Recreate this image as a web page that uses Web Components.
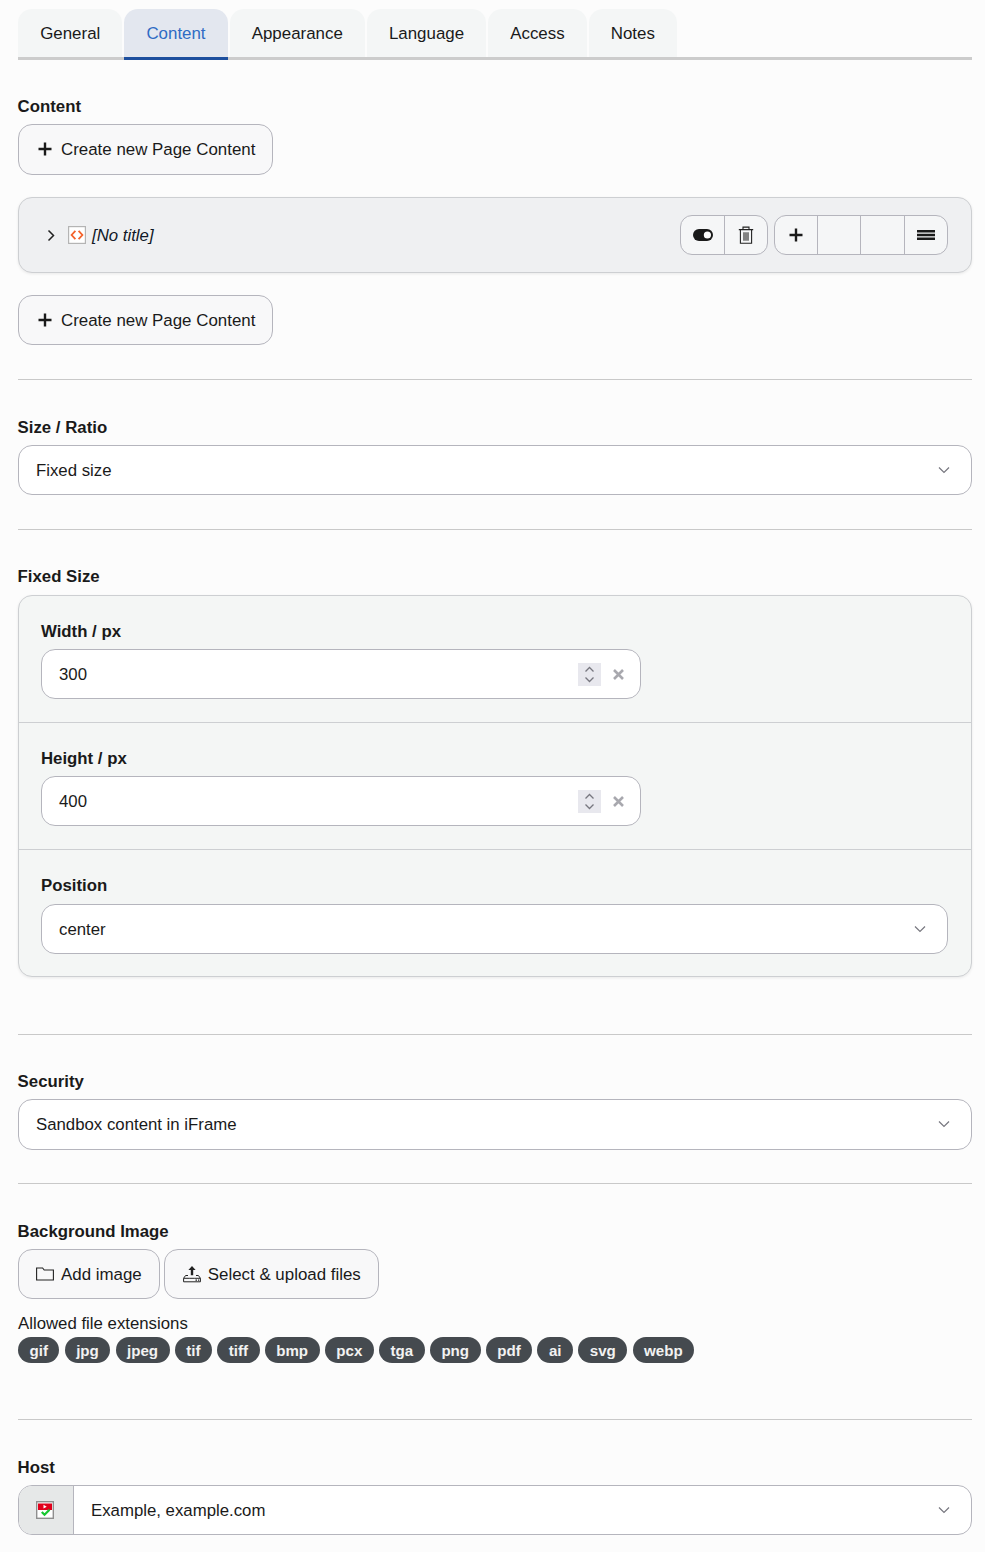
<!DOCTYPE html>
<html>
<head>
<meta charset="utf-8">
<title>Content</title>
<style>
  html, body { margin: 0; padding: 0; }
  body {
    background: #fcfcfc;
    color: #1a1a1a;
    font-family: "Liberation Sans", Arial, sans-serif;
    font-size: 16.8px;
  }
  main { display: block; padding: 9px 13px 17px 18px; }
</style>
</head>
<body>
<main>
  <form-tabs>
    <form-tab>General</form-tab>
    <form-tab active>Content</form-tab>
    <form-tab>Appearance</form-tab>
    <form-tab>Language</form-tab>
    <form-tab>Access</form-tab>
    <form-tab>Notes</form-tab>
  </form-tabs>

  <form-field label="Content" style="margin-top:36.3px">
    <form-button icon="plus" style="height:50.4px">Create new Page Content</form-button>
    <inline-record title-text="[No title]" style="margin-top:21.9px"></inline-record>
    <form-button icon="plus" style="margin-top:22.4px">Create new Page Content</form-button>
  </form-field>
  <form-divider></form-divider>

  <form-field label="Size / Ratio">
    <form-select>Fixed size</form-select>
  </form-field>
  <form-divider></form-divider>

  <form-field label="Fixed Size" tight>
    <form-panel>
      <panel-section>
        <form-field label="Width / px" flush><number-input value="300"></number-input></form-field>
      </panel-section>
      <panel-section style="height:127.4px">
        <form-field label="Height / px" flush><number-input value="400"></number-input></form-field>
      </panel-section>
      <panel-section last>
        <form-field label="Position" flush tight><form-select>center</form-select></form-field>
      </panel-section>
    </form-panel>
  </form-field>
  <form-divider gap="56.9"></form-divider>

  <form-field label="Security">
    <form-select style="height:50.4px">Sandbox content in iFrame</form-select>
  </form-field>
  <form-divider gap="33.5"></form-divider>

  <form-field label="Background Image">
    <button-row>
      <form-button icon="folder">Add image</form-button>
      <form-button icon="upload">Select &amp; upload files</form-button>
    </button-row>
    <ext-list exts="gif jpg jpeg tif tiff bmp pcx tga png pdf ai svg webp"></ext-list>
  </form-field>
  <form-divider gap="56.3"></form-divider>

  <form-field label="Host">
    <form-select addon>Example, example.com</form-select>
  </form-field>
</main>

<script>
const icons = {
  plus: `<svg width="18" height="18" viewBox="0 0 18 18"><path d="M9 2.5v13M2.5 9h13" stroke="#1a1a1a" stroke-width="2.4" fill="none"/></svg>`,
  folder: `<svg width="18" height="16" viewBox="0 0 18 16"><path d="M.6 14V2h6l1.6 2h9.2v10z" stroke="#222" stroke-width="1.1" fill="none"/></svg>`,
  upload: `<svg class="shift" width="18" height="18" viewBox="0 0 18 18"><path d="M9 1l3.6 4h-2.4v5.2H7.8V5H5.4z" fill="#222"/><path d="M5 10.5H2.6L.6 13.2v3.6h16.8v-3.6l-2-2.7H13" stroke="#222" stroke-width="1" fill="none"/><path d="M.8 13.3h5.4M11.8 13.3h5.4M6.2 13.3h5.6" stroke="#222" stroke-width="1"/><path d="M12.5 15.1h1.5M15 15.1h1.2" stroke="#222" stroke-width="1.1"/></svg>`,
  toggle: `<svg width="20" height="12" viewBox="0 0 20 12"><rect width="20" height="12" rx="6" fill="#1a1a1a"/><circle cx="14.4" cy="6" r="3.6" fill="#fff"/></svg>`,
  trash: `<svg width="16" height="18" viewBox="0 0 16 18"><path d="M.8 3.6h14.4M5 3.4V1.1h6v2.3M2.4 3.8v13.4h11.2V3.8" stroke="#222" stroke-width="1.1" fill="none"/><path d="M6 6.2v8.6M8 6.2v8.6M10 6.2v8.6" stroke="#222" stroke-width="1.1"/></svg>`,
  menu: `<svg width="18" height="10" viewBox="0 0 18 10"><path d="M0 1.3h18M0 5h18M0 8.7h18" stroke="#1a1a1a" stroke-width="2.4" fill="none"/></svg>`
};

class FormTabs extends HTMLElement {
  constructor() {
    super();
    this.attachShadow({ mode: 'open' }).innerHTML = `
    <style>
      :host { display: flex; gap: 1.75px; border-bottom: 3px solid #ccc; }
    </style>
    <slot></slot>`;
  }
}

class FormTab extends HTMLElement {
  constructor() {
    super();
    this.attachShadow({ mode: 'open' }).innerHTML = `
    <style>
      :host {
        display: block;
        background: #f4f6f6;
        border-radius: 14px 14px 0 0;
        padding: 0 22.2px;
        height: 48px;
        line-height: 50px;
        font-size: 16.9px;
        margin-bottom: -3px;
        border-bottom: 3px solid #ccc;
      }
      :host([active]) {
        background: #e3e7ef;
        color: #2f6cc4;
        border-bottom-color: #1d4f9e;
      }
    </style>
    <slot></slot>`;
  }
}

class FormField extends HTMLElement {
  constructor() {
    super();
    this.attachShadow({ mode: 'open' }).innerHTML = `
    <style>
      :host { display: block; margin-top: 36.7px; }
      :host([flush]) { margin-top: 0; }
      label { display: block; font-weight: bold; line-height: 21px; margin: 0 0 7px -.4px; }
      :host([flush]) label { margin-left: 0; }
      :host([tight]) label { line-height: 20px; margin-bottom: 8px; }
    </style>
    <label>${this.getAttribute('label')}</label>
    <slot></slot>`;
  }
}

class FormDivider extends HTMLElement {
  constructor() {
    super();
    const gap = this.getAttribute('gap') || 34;
    this.attachShadow({ mode: 'open' }).innerHTML = `
    <style>
      :host { display: block; height: 1px; background: #c9c9c9; margin-top: ${gap}px; }
    </style>`;
  }
}

class FormButton extends HTMLElement {
  constructor() {
    super();
    const icon = icons[this.getAttribute('icon')] || '';
    this.attachShadow({ mode: 'open' }).innerHTML = `
    <style>
      :host {
        display: inline-flex;
        vertical-align: top;
        align-items: center;
        gap: 7px;
        height: 50.2px;
        box-sizing: border-box;
        padding: 0 17px 0 17px;
        background: #f8f8f9;
        border: 1px solid #b5b5bd;
        border-radius: 14px;
        font-size: 16.9px;
      }
      svg { display: block; }
      svg.shift { margin-left: 1px; }
      span { padding-top: 2px; }
    </style>
    ${icon}<span><slot></slot></span>`;
  }
}

class ButtonRow extends HTMLElement {
  constructor() {
    super();
    this.attachShadow({ mode: 'open' }).innerHTML = `
    <style>
      :host { display: flex; gap: 4px; }
    </style>
    <slot></slot>`;
  }
}

class FormSelect extends HTMLElement {
  constructor() {
    super();
    const addon = this.hasAttribute('addon') ? `
      <span class="addon">
        <svg width="18" height="18" viewBox="0 0 18 18">
          <rect x=".7" y=".7" width="16.6" height="16.6" fill="#fff" stroke="#8f8f8f" stroke-width="1.4"/>
          <rect x="2" y="2.5" width="14" height="6.5" fill="#e0001b"/>
          <path d="M7.5 3.8l3.2 1.9-3.2 1.9z" fill="#fff"/>
          <path d="M5.8 11l2.7 2.7 5-5" stroke="#19c832" stroke-width="2.3" fill="none"/>
        </svg>
      </span>` : '';
    this.attachShadow({ mode: 'open' }).innerHTML = `
    <style>
      :host {
        display: flex;
        align-items: stretch;
        height: 50.2px;
        box-sizing: border-box;
        background: #fff;
        border: 1px solid #b5b5bd;
        border-radius: 14px;
        overflow: hidden;
      }
      .addon {
        flex: none;
        box-sizing: border-box;
        width: 55px;
        padding-right: 2px;
        background: #e6e8e8;
        border-right: 1px solid #b5b5bd;
        display: flex;
        align-items: center;
        justify-content: center;
      }
      .text { flex: 1; display: flex; align-items: center; padding: 2px 0 0 17px; }
      .chev { flex: none; display: flex; align-items: center; padding-right: 21px; }
    </style>
    ${addon}
    <span class="text"><slot></slot></span>
    <span class="chev">
      <svg width="12" height="8" viewBox="0 0 12 8"><path d="M1 1.5l5 5 5-5" stroke="#77777f" stroke-width="1.2" fill="none"/></svg>
    </span>`;
  }
}

class NumberInput extends HTMLElement {
  constructor() {
    super();
    this.attachShadow({ mode: 'open' }).innerHTML = `
    <style>
      :host {
        display: flex;
        align-items: center;
        width: 600px;
        height: 50.2px;
        box-sizing: border-box;
        background: #fff;
        border: 1px solid #b5b5bd;
        border-radius: 14px;
        padding-left: 17px;
      }
      .value { flex: 1; padding-top: 2px; }
      .spin {
        flex: none;
        width: 23px;
        height: 23px;
        background: #e8e8ee;
        display: flex;
        align-items: center;
        justify-content: center;
      }
      .clear { flex: none; display: flex; margin: 0 16.5px 0 11.5px; }
      svg { display: block; }
    </style>
    <span class="value">${this.getAttribute('value')}</span>
    <span class="spin">
      <svg width="11" height="19" viewBox="0 0 11 19"><path d="M1.5 6.5l4-4 4 4M1.5 12.5l4 4 4-4" stroke="#77777f" stroke-width="1.3" fill="none"/></svg>
    </span>
    <span class="clear">
      <svg width="11" height="11" viewBox="0 0 11 11"><path d="M1 1l9 9M10 1l-9 9" stroke="#a8a8ae" stroke-width="2.6" fill="none"/></svg>
    </span>`;
  }
}

class FormPanel extends HTMLElement {
  constructor() {
    super();
    this.attachShadow({ mode: 'open' }).innerHTML = `
    <style>
      :host {
        display: block;
        background: #f4f6f5;
        border: 1px solid #cdcfd2;
        border-radius: 14px;
        box-shadow: 0 1px 3px rgba(0, 0, 0, .08);
        overflow: hidden;
      }
    </style>
    <slot></slot>`;
  }
}

class PanelSection extends HTMLElement {
  constructor() {
    super();
    this.attachShadow({ mode: 'open' }).innerHTML = `
    <style>
      :host {
        display: block;
        box-sizing: border-box;
        height: 127px;
        padding: 25.5px 23px 0 22px;
        border-bottom: 1px solid #cdcfd2;
      }
      :host([last]) { border-bottom: 0; height: 125.6px; }
    </style>
    <slot></slot>`;
  }
}

class ToolGroup extends HTMLElement {
  constructor() {
    super();
    const cells = (this.getAttribute('cells') || '').split(' ')
      .map((name) => `<span>${icons[name] || ''}</span>`).join('');
    this.attachShadow({ mode: 'open' }).innerHTML = `
    <style>
      :host {
        display: flex;
        height: 40px;
        box-sizing: border-box;
        background: #f5f6f7;
        border: 1px solid #b5b5bd;
        border-radius: 12px;
        overflow: hidden;
      }
      span {
        box-sizing: border-box;
        width: 43px;
        display: flex;
        align-items: center;
        justify-content: center;
        border-left: 1px solid #b5b5bd;
      }
      span:first-of-type { border-left: 0; }
      span:first-of-type:nth-last-of-type(4) { width: 42px; }
      span:nth-of-type(3) { width: 44px; }
    </style>
    ${cells}`;
  }
}

class InlineRecord extends HTMLElement {
  constructor() {
    super();
    this.attachShadow({ mode: 'open' }).innerHTML = `
    <style>
      :host {
        display: flex;
        align-items: center;
        height: 76px;
        box-sizing: border-box;
        background: #eff0f2;
        border: 1px solid #cdcfd2;
        border-radius: 14px;
        box-shadow: 0 1px 3px rgba(0, 0, 0, .08);
        padding: 0 23px 0 28px;
      }
      .chev { display: block; margin-top: 1px; }
      .type { display: block; margin-left: 12px; }
      .title { flex: 1; margin-left: 6px; padding-top: 2px; font-style: italic; color: #111827; }
      .tools { display: flex; gap: 6px; }
    </style>
    <svg class="chev" width="9" height="13" viewBox="0 0 9 13"><path d="M1.5 1.5l5 5-5 5" stroke="#222" stroke-width="1.5" fill="none"/></svg>
    <svg class="type" width="18" height="18" viewBox="0 0 18 18">
      <rect x=".6" y=".6" width="16.8" height="16.8" fill="#fff" stroke="#b4b4b4" stroke-width="1.2"/>
      <path d="M7.4 4.8L3.6 9l3.8 4.2M10.6 4.8L14.4 9l-3.8 4.2" stroke="#f4622b" stroke-width="1.8" fill="none"/>
    </svg>
    <span class="title">${this.getAttribute('title-text')}</span>
    <span class="tools">
      <tool-group cells="toggle trash"></tool-group>
      <tool-group cells="plus blank blank menu"></tool-group>
    </span>`;
  }
}

class ExtList extends HTMLElement {
  constructor() {
    super();
    const badges = this.getAttribute('exts').split(' ')
      .map((ext) => `<b>${ext}</b>`).join('');
    this.attachShadow({ mode: 'open' }).innerHTML = `
    <style>
      :host { display: block; margin-top: 14.5px; }
      p { margin: 0; line-height: 20px; }
      div { display: flex; gap: 5.2px; margin-top: 3px; }
      b {
        display: block;
        height: 26px;
        line-height: 27px;
        padding: 0 11.5px;
        border-radius: 13px;
        background: #454a4f;
        color: #f2f2f2;
        font-size: 15.12px;
      }
    </style>
    <p>Allowed file extensions</p>
    <div>${badges}</div>`;
  }
}

customElements.define('form-tabs', FormTabs);
customElements.define('form-tab', FormTab);
customElements.define('form-field', FormField);
customElements.define('form-divider', FormDivider);
customElements.define('form-button', FormButton);
customElements.define('button-row', ButtonRow);
customElements.define('form-select', FormSelect);
customElements.define('number-input', NumberInput);
customElements.define('form-panel', FormPanel);
customElements.define('panel-section', PanelSection);
customElements.define('tool-group', ToolGroup);
customElements.define('inline-record', InlineRecord);
customElements.define('ext-list', ExtList);
</script>
</body>
</html>
